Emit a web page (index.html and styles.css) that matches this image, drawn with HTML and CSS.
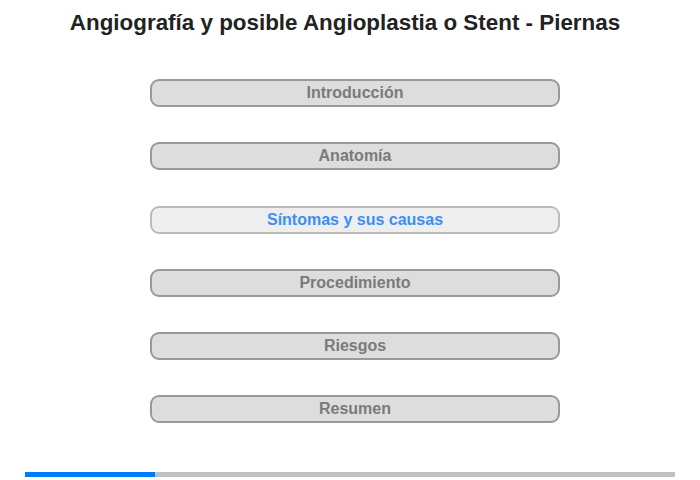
FILE: index.html
```html
<!DOCTYPE html>
<html>
<head>
<meta charset="utf-8">
<link rel="stylesheet" href="styles.css">
</head>
<body>
<h1 class="title">Angiografía y posible Angioplastia o Stent - Piernas</h1>
<div class="menu">
  <div class="btn">Introducción</div>
  <div class="btn">Anatomía</div>
  <div class="btn active">Síntomas y sus causas</div>
  <div class="btn">Procedimiento</div>
  <div class="btn">Riesgos</div>
  <div class="btn">Resumen</div>
</div>
<div class="progress"><div class="fill" style="width:20%"></div></div>
</body>
</html>
```
FILE: styles.css
```css
html, body { margin: 0; padding: 0; background: #fff; }
body { font-family: "Liberation Sans", Arial, sans-serif; width: 700px; height: 480px; position: relative; }
.title { margin: 0; padding-top: 10px; height: 28px; font-size: 22.4px; font-weight: bold; color: #222; text-align: center; padding-right: 10px; line-height: 26px; }
.menu { display: flex; flex-direction: column; gap: 35.25px; margin-left: 150px; width: 410px; margin-top: 41px; }
.btn { box-sizing: border-box; height: 28px; border: 2px solid #999; border-radius: 9px; background: #ddd; color: #7a7a7a; font-weight: bold; font-size: 16px; text-align: center; line-height: 24px; }
.btn.active { background: #eee; border-color: #bbb; color: #3b8ef5; }
.progress { position: absolute; left: 25px; top: 472px; width: 650px; height: 5px; background: #c0c0c0; }
.fill { height: 100%; background: #007bff; }
```
